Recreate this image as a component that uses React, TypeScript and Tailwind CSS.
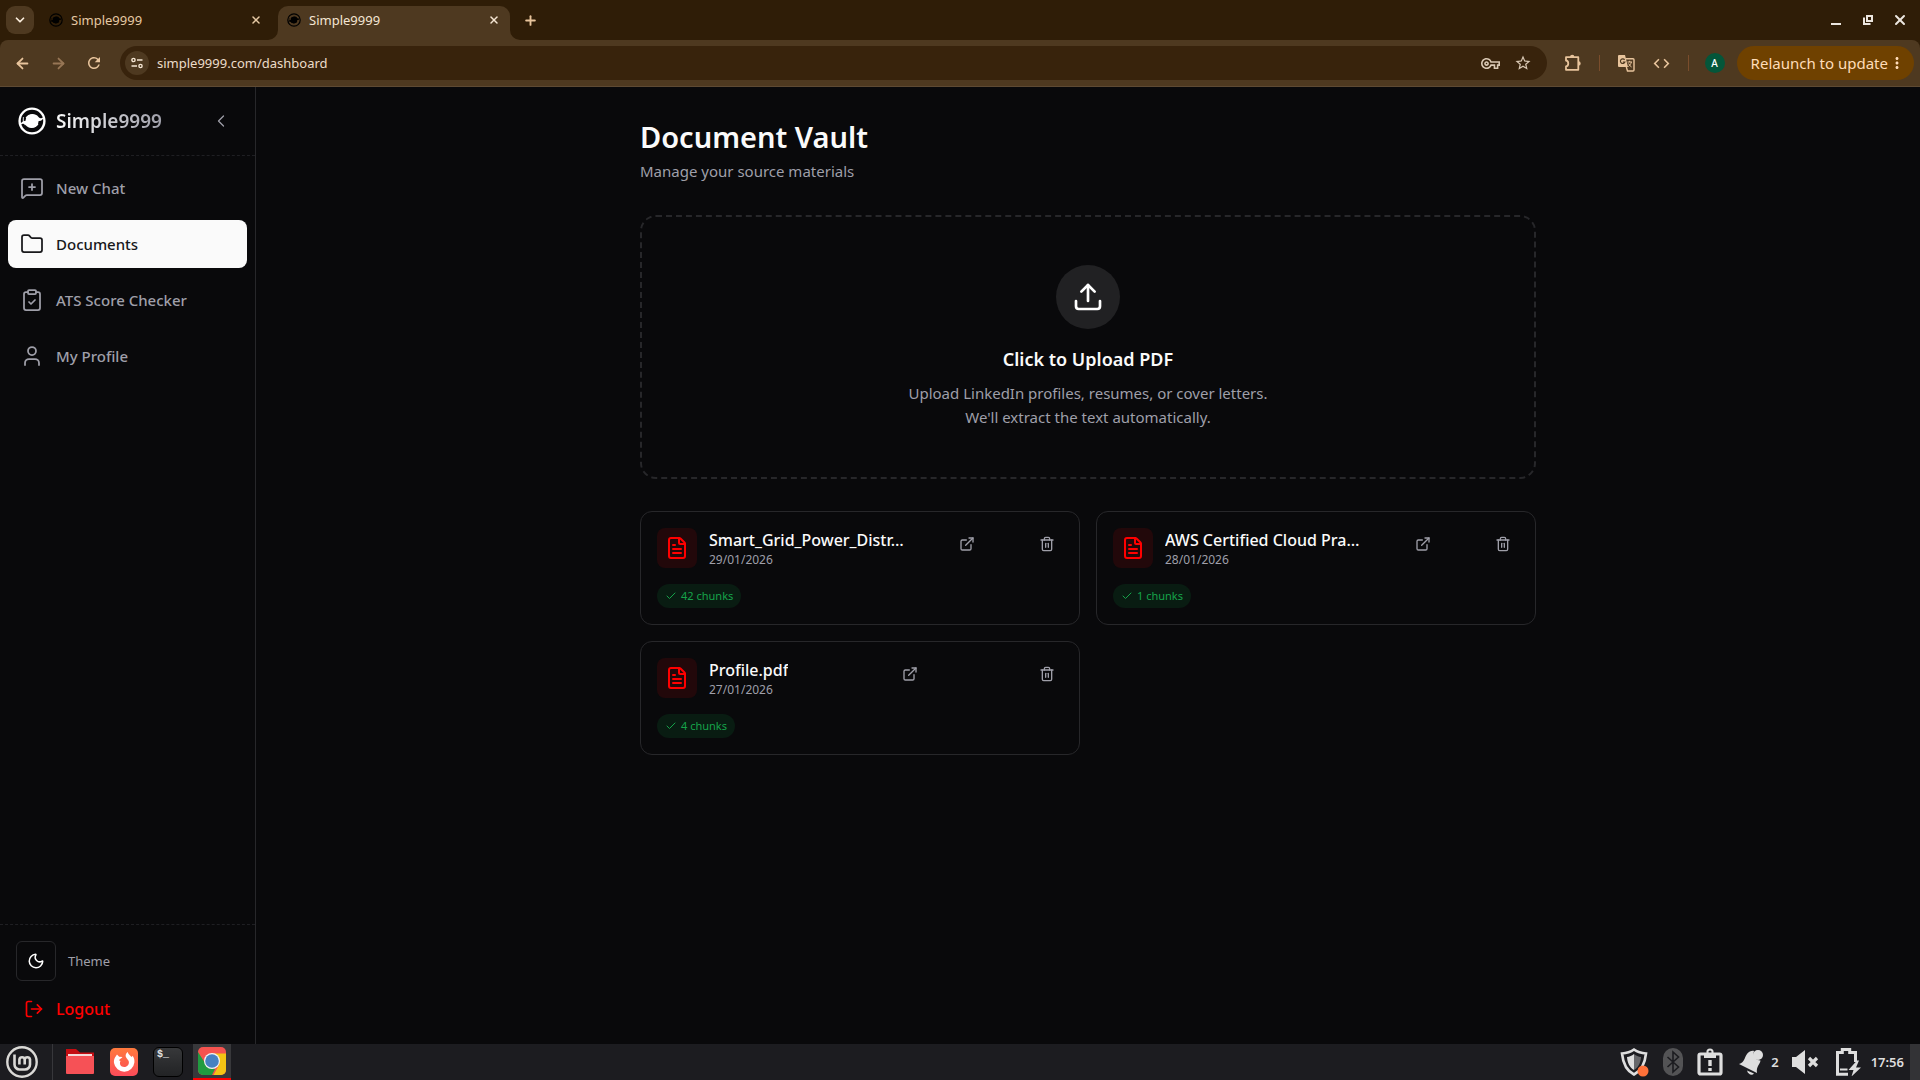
import React, { useState } from "react";
import {
    ArrowLeft,
    ArrowRight,
    Check,
    ChevronDown,
    ChevronLeft,
    ClipboardCheck,
    ExternalLink,
    FileText,
    Folder,
    LogOut,
    MessageSquarePlus,
    Moon,
    Plus,
    Trash2,
    Upload,
    User,
    X,
} from "lucide-react";
import {
    MdCode,
    MdMoreVert,
    MdOutlineVpnKey,
    MdRefresh,
    MdStarBorder,
} from "react-icons/md";

interface VaultDocument {
    name: string;
    date: string;
    chunks: number;
}

const documents: VaultDocument[] = [
    { name: "Smart_Grid_Power_Distr…", date: "29/01/2026", chunks: 42 },
    { name: "AWS Certified Cloud Pra…", date: "28/01/2026", chunks: 1 },
    { name: "Profile.pdf", date: "27/01/2026", chunks: 4 },
];

const navItems = [
    { label: "New Chat", icon: MessageSquarePlus },
    { label: "Documents", icon: Folder },
    { label: "ATS Score Checker", icon: ClipboardCheck },
    { label: "My Profile", icon: User },
];

function Logo({ className }: { className: string }) {
    return (
        <svg viewBox="0 0 28 28" fill="none" className={className} aria-hidden="true">
            <circle cx="14" cy="14" r="12.4" stroke="currentColor" strokeWidth="2.4" />
            <circle cx="14" cy="14" r="6.6" fill="currentColor" />
            <path d="M7.500 11C10 6.500 17 5.500 20.500 10c1.500 1.800 3.500 1.500 5 0-.5 3-2.500 4.500-5.500 4" fill="currentColor" />
            <path d="M20.500 17C18 21.500 11 22.500 7.500 18c-1.500-1.800-3.500-1.500-5 0 .5-3 2.500-4.500 5.500-4" fill="currentColor" />
            <path d="M5.500 10c-.5 3 0 6 2 8" stroke="currentColor" strokeWidth="1.200" opacity=".7" />
        </svg>
    );
}

function BrowserTab({ active }: { active?: boolean }) {
    return (
        <div
            className={
                active
                    ? "relative flex h-[34px] w-[232px] items-center rounded-t-[10px] bg-[#4e3920] pb-1.5 pl-[9px] pr-[7px] text-[#f5e6d3]"
                    : "flex h-[34px] w-[232px] items-center pb-1.5 pl-[9px] pr-[7px] text-[#e6c9a4]"
            }
        >
            {active && (
                <>
                    <svg viewBox="0 0 10 10" className="absolute -left-2.5 bottom-0 size-2.5" aria-hidden="true">
                        <path d="M10 0v10H0A10 10 0 0 0 10 0Z" fill="#4e3920" />
                    </svg>
                    <svg viewBox="0 0 10 10" className="absolute -right-2.5 bottom-0 size-2.5" aria-hidden="true">
                        <path d="M0 0v10h10A10 10 0 0 1 0 0Z" fill="#4e3920" />
                    </svg>
                </>
            )}
            <Logo className="size-3.5 text-black" />
            <span className="ml-2 flex-1 text-[13px] leading-4">Simple9999</span>
            <button type="button" aria-label="Close tab" className="flex size-[18px] items-center justify-center">
                <X size={12} strokeWidth={3} />
            </button>
        </div>
    );
}

function BrowserChrome() {
    return (
        <header className="shrink-0 bg-[#2f1d07] text-[#e8c49c]">
            <div className="flex h-10 items-end gap-1.5 pl-1.5">
                <button
                    type="button"
                    aria-label="Search tabs"
                    className="mb-1.5 flex size-7 items-center justify-center rounded-[9px] bg-[#4e3920] text-[#fbeedd]"
                >
                    <ChevronDown size={14} strokeWidth={3} />
                </button>
                <BrowserTab />
                <BrowserTab active />
                <button type="button" aria-label="New tab" className="mb-1.5 flex size-7 items-center justify-center">
                    <Plus size={15} strokeWidth={3} />
                </button>
                <div className="mb-1.5 ml-auto mr-1 flex h-7 text-[#ece6df]">
                    <button type="button" aria-label="Minimize" className="flex w-8 items-center justify-center">
                        <span className="mt-2 h-0.5 w-2.5 bg-current" />
                    </button>
                    <button type="button" aria-label="Restore" className="flex w-8 items-center justify-center">
                        <svg viewBox="0 0 10 10" fill="none" stroke="currentColor" strokeWidth="2" className="size-2.5" aria-hidden="true">
                            <path d="M4 1h5v5H4ZM1 2.500V9h6.500" />
                        </svg>
                    </button>
                    <button type="button" aria-label="Close" className="flex w-8 items-center justify-center">
                        <X size={16} strokeWidth={3} />
                    </button>
                </div>
            </div>

            <div className="flex h-[47px] items-center rounded-t-lg border-b border-[#5e4a33] bg-[#4e3920] pl-1 pr-1.5">
                <button type="button" aria-label="Back" className="flex w-9 justify-center">
                    <ArrowLeft size={17} strokeWidth={2.5} />
                </button>
                <button type="button" aria-label="Forward" className="flex w-9 justify-center text-[#977655]">
                    <ArrowRight size={17} strokeWidth={2.5} />
                </button>
                <button type="button" aria-label="Reload" className="flex w-9 justify-center">
                    <MdRefresh size={18} />
                </button>
                <div className="ml-2 flex h-[34px] flex-1 items-center rounded-full bg-[#38230c] pl-[5px] pr-2 text-[#d9c8b4]">
                    <button
                        type="button"
                        aria-label="Site information"
                        className="flex size-6 items-center justify-center rounded-full bg-[#4e3920] text-[#f5e6d3]"
                    >
                        <svg viewBox="0 0 12 12" fill="none" stroke="currentColor" strokeWidth="1.400" className="size-3" aria-hidden="true">
                            <circle cx="2.500" cy="3" r="1.600" />
                            <path d="M6 3h5.500M.5 9H6" />
                            <circle cx="9.500" cy="9" r="1.600" />
                        </svg>
                    </button>
                    <input
                        type="text"
                        aria-label="Address"
                        defaultValue="simple9999.com/dashboard"
                        className="ml-2 min-w-0 flex-1 bg-transparent text-[13px] leading-5 text-[#ecdcc9] outline-none"
                    />
                    <button type="button" aria-label="Passwords" className="flex w-8 justify-center">
                        <MdOutlineVpnKey size={19} />
                    </button>
                    <button type="button" aria-label="Bookmark" className="flex w-8 justify-center">
                        <MdStarBorder size={18} />
                    </button>
                </div>
                <button type="button" aria-label="Extensions" className="ml-2 flex w-9 justify-center">
                    <svg viewBox="0 0 18 18" fill="none" className="size-[18px]" aria-hidden="true">
                        <path
                            d="M2 3.200h12.300V15.800H2v-3.300c3-.3 3-5.700 0-6Z"
                            stroke="currentColor"
                            strokeWidth="1.800"
                            strokeLinejoin="round"
                        />
                        <path d="M6 3a2 2 0 0 1 4.400 0ZM14.500 7.200a2 2 0 0 1 0 4.400Z" fill="currentColor" />
                    </svg>
                </button>
                <span className="mx-2 h-4 w-px bg-[#7a4d2c]" />
                <button type="button" aria-label="Translate" className="flex w-9 justify-center">
                    <svg viewBox="0 0 18 18" fill="none" className="size-[18px]" aria-hidden="true">
                        <path d="M2 1h6l3 12H2a1 1 0 0 1-1-1V2a1 1 0 0 1 1-1Z" fill="currentColor" />
                        <path d="M8.500 4.700H16a1 1 0 0 1 1 1V16a1 1 0 0 1-1 1h-5.500L9.300 13" stroke="currentColor" strokeWidth="1.400" />
                        <path d="M7.600 5.800A2.300 2.300 0 1 0 7.900 8H5.800" stroke="#4e3920" strokeWidth="1.200" />
                        <path d="M10.500 8H15M12.700 6.800V8m1.700 0c-.5 2-1.700 3.500-3 4.500M11.600 9.500c.7 1.600 1.800 2.800 3 3.500" stroke="currentColor" />
                    </svg>
                </button>
                <button type="button" aria-label="Developer tools" className="flex w-9 justify-center">
                    <MdCode size={19} />
                </button>
                <span className="mx-2 h-4 w-px bg-[#7a4d2c]" />
                <button
                    type="button"
                    aria-label="Profile"
                    className="ml-2 mr-3 flex size-5 items-center justify-center rounded-full bg-[#04563a] text-[10px] font-medium leading-5 text-white"
                >
                    A
                </button>
                <button
                    type="button"
                    className="flex h-[34px] items-center rounded-full bg-[#6f4100] pl-3.5 pr-2 text-[15px] leading-5 text-[#ffdcb8]"
                >
                    Relaunch to update
                    <MdMoreVert size={18} />
                </button>
            </div>
        </header>
    );
}

function Sidebar() {
    const [activeItem, setActiveItem] = useState("Documents");

    return (
        <aside className="flex w-64 shrink-0 flex-col border-r border-zinc-800">
            <div className="flex h-[69px] items-center border-b border-dashed border-[#1f1f23] pl-[18px] pr-[22px]">
                <Logo className="size-7 text-white" />
                <span className="ml-2.5 bg-linear-to-r from-zinc-50 to-zinc-400 bg-clip-text text-[19px] font-semibold leading-7 text-transparent">
                    Simple9999
                </span>
                <button type="button" aria-label="Collapse sidebar" className="ml-auto flex size-6 items-center justify-center text-zinc-400">
                    <ChevronLeft size={20} strokeWidth={1.5} />
                </button>
            </div>

            <nav className="flex flex-col gap-2 p-2">
                {navItems.map((item) => (
                    <button
                        key={item.label}
                        type="button"
                        onClick={() => setActiveItem(item.label)}
                        className={
                            item.label === activeItem
                                ? "flex h-12 items-center gap-3 rounded-lg bg-zinc-50 px-3 text-[15px] font-medium leading-6 text-zinc-900"
                                : "flex h-12 items-center gap-3 rounded-lg px-3 text-[15px] font-medium leading-6 text-zinc-400"
                        }
                    >
                        <item.icon size={24} strokeWidth={1.75} />
                        {item.label}
                    </button>
                ))}
            </nav>

            <div className="mt-auto border-t border-dashed border-[#1f1f23] px-4 pb-[15px] pt-4">
                <div className="flex items-center gap-3">
                    <button
                        type="button"
                        aria-label="Toggle theme"
                        className="flex size-10 items-center justify-center rounded-md border border-zinc-800 text-white"
                    >
                        <Moon size={18} />
                    </button>
                    <span className="text-[13px] leading-5 text-zinc-400">Theme</span>
                </div>
                <button type="button" className="mt-2 flex h-10 items-center gap-3 pl-2 text-[16px] font-medium leading-6 text-[#ff0000]">
                    <LogOut size={20} strokeWidth={2} />
                    Logout
                </button>
            </div>
        </aside>
    );
}

function DocumentCard({ doc }: { doc: VaultDocument }) {
    return (
        <article className="rounded-xl border border-zinc-800 p-4">
            <div className="flex items-start justify-between">
                <div className="flex gap-3">
                    <div className="flex size-10 items-center justify-center rounded-lg bg-[#22080a] text-[#ff0000]">
                        <FileText size={24} />
                    </div>
                    <div>
                        <h3 className="max-w-[200px] truncate text-[16px] font-medium leading-6 text-zinc-50">{doc.name}</h3>
                        <p className="text-[12px] leading-4 text-zinc-400">{doc.date}</p>
                    </div>
                </div>
                <a href="#open" aria-label={`Open ${doc.name}`} className="flex size-8 items-center justify-center text-zinc-400">
                    <ExternalLink size={16} />
                </a>
                <button type="button" aria-label={`Delete ${doc.name}`} className="flex size-8 items-center justify-center text-zinc-400">
                    <Trash2 size={16} />
                </button>
            </div>
            <div className="mt-4 flex">
                <span className="flex h-6 items-center gap-1 rounded-full bg-[#091c12] px-2 text-[11px] leading-4 text-[#16a34a]">
                    <Check size={12} />
                    {doc.chunks} chunks
                </span>
            </div>
        </article>
    );
}

function Taskbar() {
    return (
        <footer className="flex h-9 shrink-0 items-center bg-[#1c1c20] text-[#dedede]">
            <button type="button" aria-label="Menu" className="ml-1.5 flex">
                <svg viewBox="0 0 32 32" fill="none" stroke="#dad9d6" className="size-8" aria-hidden="true">
                    <circle cx="16" cy="16" r="14.700" strokeWidth="2.400" />
                    <path d="M8.500 8.500v10a5 5 0 0 0 5 5h5.500a5 5 0 0 0 5-5v-5a2.700 2.700 0 0 0-5.300 0v5m0-5a2.700 2.700 0 0 0-5.300 0v5" strokeWidth="2.600" />
                </svg>
            </button>
            <span className="ml-3.5 h-full w-px bg-[#37373b]" />
            <button type="button" aria-label="Files" className="ml-3 flex">
                <svg viewBox="0 0 30 30" className="size-[30px]" aria-hidden="true">
                    <path d="M1 2h10l4 3.500h14V12H1Z" fill="#c40d12" />
                    <path d="M3 7h24v3H3Z" fill="#f3d9d9" />
                    <path d="M1 9h28v17a1 1 0 0 1-1 1H2a1 1 0 0 1-1-1Z" fill="#f65156" />
                </svg>
            </button>
            <button type="button" aria-label="Firefox" className="ml-3.5 flex">
                <svg viewBox="0 0 30 30" className="size-[30px]" aria-hidden="true">
                    <defs>
                        <linearGradient id="firefox-tile" x1="0" y1="0" x2="0" y2="1">
                            <stop stopColor="#ff7a3d" />
                            <stop offset="1" stopColor="#fb4b59" />
                        </linearGradient>
                    </defs>
                    <rect x="1" y="1" width="28" height="28" rx="5" fill="url(#firefox-tile)" />
                    <path d="M6 10.500 8 7.500l2.200 2.200 3.300.3c-1.200 1.500-3 2-3.500 3.300l1.500.7c-1.600 3 .5 6 3.600 6 3.300 0 5.300-2.700 4.700-5.500-.4-2-2.300-2.600-3-4.700-.5-1.800.2-3.700 1.900-4.800.4 2.300 2.600 3.500 4 5l1-1.200c1.500 2.200 1.900 4.200 1.700 6.700A10.300 10.300 0 0 1 5 16c-.2-2 .1-3.900 1-5.500Z" fill="#fff" />
                </svg>
            </button>
            <button type="button" aria-label="Terminal" className="ml-3.5 flex">
                <span className="flex size-[30px] items-start rounded-md border border-black bg-linear-to-b from-[#37383a] to-[#222325] pl-[3px] pt-px font-['Liberation_Mono',monospace] text-[10px] font-bold leading-3 text-[#e6e6e6]">
                    $_
                </span>
            </button>
            <button type="button" aria-label="Chrome" className="ml-2.5 flex h-full w-[38px] items-center justify-center border-b-2 border-[#ff0000] bg-[#38383b]">
                <svg viewBox="0 0 28 28" className="size-7" aria-hidden="true">
                    <defs>
                        <clipPath id="chrome-tile">
                            <rect width="28" height="28" rx="5" />
                        </clipPath>
                    </defs>
                    <g clipPath="url(#chrome-tile)">
                        <path d="M0 0h28v28H0Z" fill="#f5534f" />
                        <path d="M0 5l9 14 8 3-3 6H0Z" fill="#219b40" />
                        <path d="M14 6.500h14V28H15.500l6-11Z" fill="#f4c414" />
                    </g>
                    <circle cx="14" cy="14" r="8" fill="#f4f4f4" />
                    <circle cx="14" cy="14" r="6.800" fill="#4681c1" />
                </svg>
            </button>

            <div className="ml-auto flex h-full items-center">
                <svg viewBox="0 0 30 30" fill="none" className="size-[30px]" aria-hidden="true">
                    <path d="M15 2.500c4 2.800 8 3.700 12 4-1 10-4 17-12 21-8-4-11-11-12-21 4-.3 8-1.200 12-4Z" stroke="#dedede" strokeWidth="2.600" />
                    <path d="M15 7v16c-4.500-2.800-6.500-7-7-13 2.500-.3 4.800-1.300 7-3Z" fill="#dedede" />
                    <path d="M15 7v16c4.500-2.800 6.500-7 7-13-2.500-.3-4.800-1.300-7-3Z" fill="#68686b" />
                    <circle cx="24" cy="24" r="5.500" fill="#ff7139" />
                </svg>
                <svg viewBox="0 0 20 28" fill="none" className="ml-3.5 h-7 w-5" aria-hidden="true">
                    <rect width="20" height="28" rx="10" fill="#535355" />
                    <path d="m4.500 9 11 10-5.500 5V4l5.500 5-11 10" stroke="#1c1c20" strokeWidth="1.600" />
                </svg>
                <svg viewBox="0 0 26 28" fill="none" className="ml-3.5 h-7 w-[26px]" aria-hidden="true">
                    <rect x="2" y="6" width="22" height="20" rx="1.500" stroke="#dedede" strokeWidth="3.200" />
                    <path d="M7 5h12v5H7Z" fill="#dedede" />
                    <circle cx="13" cy="4" r="2.600" stroke="#dedede" strokeWidth="2" />
                    <path d="M13 12v6M13 20v3" stroke="#dedede" strokeWidth="3.400" />
                </svg>
                <svg viewBox="0 0 28 28" className="ml-3.5 size-7" aria-hidden="true">
                    <path d="M2 16c6-2 5-6 8-10 2-2.700 5-3.500 7-3a7 7 0 0 0 6.500 9.500C23 17 19 18 20 25Z" fill="#dedede" />
                    <path d="M10 22.500 17 25.500c-2 2.500-6 1-7-3Z" fill="#dedede" />
                    <circle cx="21" cy="7" r="5" fill="#dedede" />
                </svg>
                <span className="ml-1.5 text-[13px] font-semibold leading-4">2</span>
                <svg viewBox="0 0 28 28" className="ml-3 size-7" aria-hidden="true">
                    <path d="M1 9h4l9-7v24l-9-7H1Z" fill="#dedede" />
                    <path d="m18 10 8 8m0-8-8 8" stroke="#dedede" strokeWidth="3.200" />
                </svg>
                <svg viewBox="0 0 26 28" fill="none" className="ml-4 h-7 w-[26px]" aria-hidden="true">
                    <path d="M13 26.200H2.500V4.500h4.800V1.500h7.400v3h5.800V14" stroke="#dedede" strokeWidth="3" />
                    <path d="M5 21.500h7.500" stroke="#dedede" strokeWidth="2" />
                    <path d="M22 12.500 13.500 22h5l-2 6.500L26 19.500h-5l3-7Z" fill="#dedede" />
                </svg>
                <span className="ml-2.5 text-[13px] font-semibold leading-4">17:56</span>
                <button type="button" aria-label="Show desktop" className="ml-1.5 h-full w-2.5 bg-[#333336]" />
            </div>
        </footer>
    );
}

export default function App() {
    return (
        <div className="flex min-h-screen flex-col bg-[#09090b] font-['Noto_Sans',sans-serif]">
            <BrowserChrome />
            <div className="flex flex-1">
                <Sidebar />
                <main className="flex-1 p-8">
                    <div className="mx-auto max-w-4xl">
                        <h1 className="text-[29px] font-semibold leading-9 text-zinc-50">Document Vault</h1>
                        <p className="mt-1 text-[15px] leading-6 text-zinc-400">Manage your source materials</p>

                        <label className="mt-8 flex cursor-pointer flex-col items-center rounded-2xl border-2 border-dashed border-zinc-800 p-12 text-center">
                            <input type="file" accept="application/pdf" className="sr-only" />
                            <span className="flex size-16 items-center justify-center rounded-full bg-[#212123] text-white">
                                <Upload size={32} />
                            </span>
                            <span className="mt-4 text-[18px] font-semibold leading-7 text-zinc-50">Click to Upload PDF</span>
                            <span className="mt-2 text-[15px] leading-6 text-zinc-400">
                                Upload LinkedIn profiles, resumes, or cover letters.
                                <br />
                                We'll extract the text automatically.
                            </span>
                        </label>

                        <div className="mt-8 grid grid-cols-2 gap-4">
                            {documents.map((doc) => (
                                <DocumentCard key={doc.name} doc={doc} />
                            ))}
                        </div>
                    </div>
                </main>
            </div>
            <Taskbar />
        </div>
    );
}
